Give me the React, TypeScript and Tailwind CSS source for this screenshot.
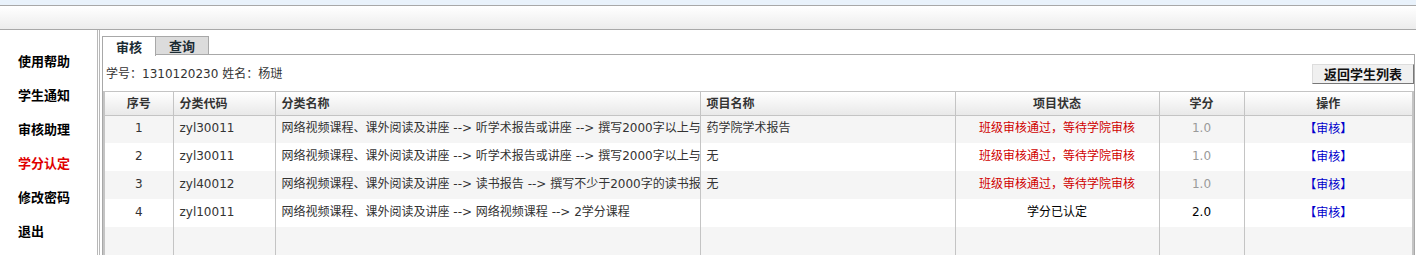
import React from "react";

const rows = [
  { n: "1", code: "zyl30011", name: "网络视频课程、课外阅读及讲座 --> 听学术报告或讲座 --> 撰写2000字以上与讲座相关的心得体会", proj: "药学院学术报告", status: "班级审核通过，等待学院审核", red: true, credit: "1.0", gray: true },
  { n: "2", code: "zyl30011", name: "网络视频课程、课外阅读及讲座 --> 听学术报告或讲座 --> 撰写2000字以上与讲座相关的心得体会", proj: "无", status: "班级审核通过，等待学院审核", red: true, credit: "1.0", gray: true },
  { n: "3", code: "zyl40012", name: "网络视频课程、课外阅读及讲座 --> 读书报告 --> 撰写不少于2000字的读书报告", proj: "无", status: "班级审核通过，等待学院审核", red: true, credit: "1.0", gray: true },
  { n: "4", code: "zyl10011", name: "网络视频课程、课外阅读及讲座 --> 网络视频课程 --> 2学分课程", proj: "", status: "学分已认定", red: false, credit: "2.0", gray: false },
];

const menu = ["使用帮助", "学生通知", "审核助理", "学分认定", "修改密码", "退出"];

export default function App() {
  const font = { fontFamily: "'DejaVu Sans','Noto Sans CJK SC',sans-serif" };
  const cjk = { fontFamily: "'Noto Sans CJK SC',sans-serif" };
  return (
    <div className="w-[1416px] h-[255px] overflow-hidden bg-white text-[12px] text-[#333]" style={font}>
      <div className="h-[5px] bg-[#e9f2fb]" />
      <div className="h-[25px] border-t border-b border-[#a8a8a8] bg-gradient-to-b from-white to-[#ececec]" />
      <div className="flex h-[225px]">
        <div className="w-[100px] shrink-0 border-r-[3px] border-double border-[#b8b8b8] pl-[18px] pt-[22px] flex flex-col gap-[16px]">
          {menu.map((m) => (
            <div key={m} className={`h-[18px] leading-[18px] text-[13px] font-bold ${m === "学分认定" ? "text-[#e00000]" : "text-black"}`} style={cjk}>
              {m}
            </div>
          ))}
        </div>
        <div className="flex-1 pl-[2px] pt-[5px] pr-[2px] flex flex-col">
          <div className="flex h-[20px] items-end">
            <div className="w-[54px] h-[20px] border-t border-l border-r border-[#a8a8a8] bg-white flex items-center justify-center font-bold text-[13px] text-[#1b2b33] relative top-[1px]" style={cjk}>
              审核
            </div>
            <div className="w-[53px] h-[19px] border-t border-r border-b border-[#a8a8a8] bg-[#dcdcdc] flex items-center justify-center font-bold text-[13px] text-[#1b2b33]" style={cjk}>
              查询
            </div>
            <div className="flex-1 border-b border-[#a8a8a8]" />
          </div>
          <div className="flex-1 border-l border-r border-[#a8a8a8] flex flex-col">
            <div className="h-[36px] flex items-center justify-between pl-[3px]">
              <span className="pt-[2px]">学号：1310120230 姓名：杨琎</span>
              <button className="h-[20px] w-[102px] mt-[1px] border border-[#777] border-t-[#ddd] border-l-[#ddd] bg-[#f0f0f0] font-bold text-[13px] text-[#111] flex items-center justify-center" style={cjk}>
                返回学生列表
              </button>
            </div>
            <div className="flex-1 border-l-2 border-t border-[#c4c4c4] overflow-hidden">
              <table className="table-fixed border-collapse w-[1308px]">
                <colgroup>
                  <col className="w-[68px]" />
                  <col className="w-[102px]" />
                  <col className="w-[425px]" />
                  <col className="w-[255px]" />
                  <col className="w-[204px]" />
                  <col className="w-[85px]" />
                  <col className="w-[169px]" />
                </colgroup>
                <thead>
                  <tr className="h-[23px] bg-gradient-to-b from-white to-[#e9e9e9] font-bold" style={cjk}>
                    <th className="border-r border-b border-[#c4c4c4] text-center">序号</th>
                    <th className="border-r border-b border-[#c4c4c4] text-left pl-[6px]">分类代码</th>
                    <th className="border-r border-b border-[#c4c4c4] text-left pl-[6px]">分类名称</th>
                    <th className="border-r border-b border-[#c4c4c4] text-left pl-[6px]">项目名称</th>
                    <th className="border-r border-b border-[#c4c4c4] text-center">项目状态</th>
                    <th className="border-r border-b border-[#c4c4c4] text-center">学分</th>
                    <th className="border-r-2 border-b border-[#c4c4c4] text-center">操作</th>
                  </tr>
                </thead>
                <tbody>
                  {rows.map((r, i) => (
                    <tr key={r.n} className={`h-[28px] ${i % 2 === 0 ? "bg-[#f5f5f5]" : "bg-white"}`}>
                      <td className="border-r border-[#c4c4c4] text-center pb-[2px]">{r.n}</td>
                      <td className="border-r border-[#c4c4c4] pl-[6px] pb-[2px]">{r.code}</td>
                      <td className="border-r border-[#c4c4c4] pl-[6px] pb-[2px] whitespace-nowrap overflow-hidden">{r.name}</td>
                      <td className="border-r border-[#c4c4c4] pl-[6px] pb-[2px] whitespace-nowrap overflow-hidden">{r.proj}</td>
                      <td className={`border-r border-[#c4c4c4] text-center pb-[2px] ${r.red ? "text-[#d00000]" : "text-black"}`}>{r.status}</td>
                      <td className={`border-r border-[#c4c4c4] text-center pb-[2px] ${r.gray ? "text-[#9a9a9a]" : "text-black"}`}>{r.credit}</td>
                      <td className="border-r-2 border-[#c4c4c4] text-center text-[#0000cc]">【审核】</td>
                    </tr>
                  ))}
                  <tr className="h-[40px] bg-[#f5f5f5]">
                    <td className="border-r border-[#c4c4c4]" />
                    <td className="border-r border-[#c4c4c4]" />
                    <td className="border-r border-[#c4c4c4]" />
                    <td className="border-r border-[#c4c4c4]" />
                    <td className="border-r border-[#c4c4c4]" />
                    <td className="border-r border-[#c4c4c4]" />
                    <td className="border-r-2 border-[#c4c4c4]" />
                  </tr>
                </tbody>
              </table>
            </div>
          </div>
        </div>
      </div>
    </div>
  );
}
